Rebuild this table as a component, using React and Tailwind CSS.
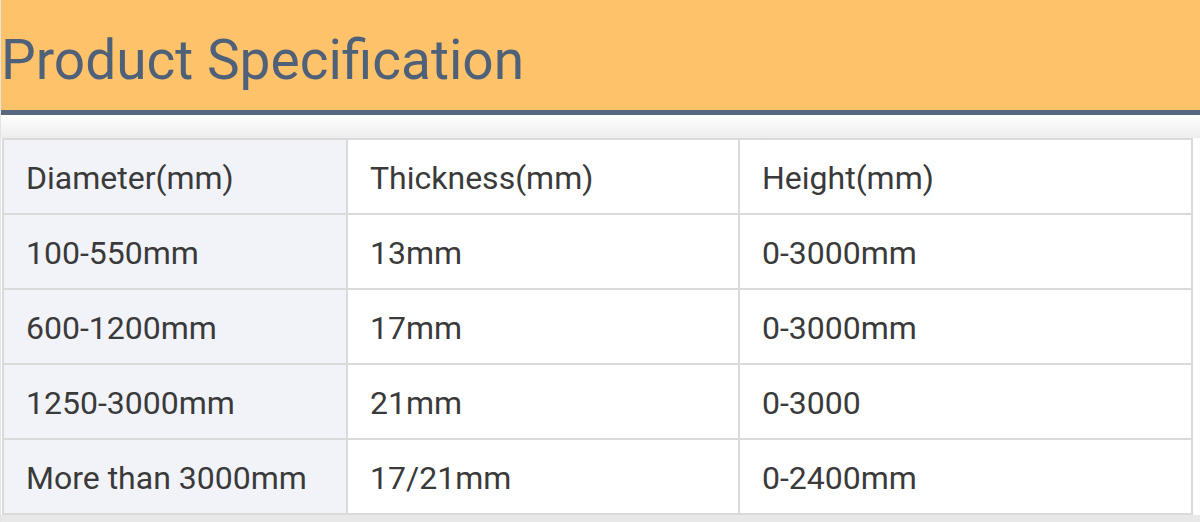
export default function App() {
  const rows = [
    ["Diameter(mm)", "Thickness(mm)", "Height(mm)"],
    ["100-550mm", "13mm", "0-3000mm"],
    ["600-1200mm", "17mm", "0-3000mm"],
    ["1250-3000mm", "21mm", "0-3000"],
    ["More than 3000mm", "17/21mm", "0-2400mm"],
  ]

  return (
    <div className="w-[1200px] h-[522px] overflow-hidden bg-white border-l border-[#e4e4e4] font-['Roboto',sans-serif]">
      {/* Title bar */}
      <div className="h-[115px] bg-[#fec26b] border-b-[5px] border-[#56677f] flex items-start">
        <h1 className="pt-[28px] text-[55px] leading-[64px] text-[#4f6079] font-normal">Product Specification</h1>
      </div>

      {/* shadow gap */}
      <div className="h-[23px] bg-gradient-to-b from-white to-[#ededed]" />

      <div className="pl-px pr-[8px]">
        <table className="w-[1191px] border-collapse table-fixed border-2 border-[#dadada]">
          <colgroup>
            <col className="w-[344px]" />
            <col className="w-[392px]" />
            <col />
          </colgroup>
          <tbody>
            {rows.map((row, i) => (
              <tr key={i} className="h-[75px]">
                {row.map((cell, j) => (
                  <td
                    key={j}
                    className={`border-2 border-[#dadada] pl-[22px] pt-[2px] text-[32px] text-[#3a3a3a] align-middle ${
                      j === 0 ? "bg-[#f2f3f8]" : "bg-white"
                    }`}
                  >
                    {cell}
                  </td>
                ))}
              </tr>
            ))}
          </tbody>
        </table>
      </div>

      <div className="h-[10px] bg-[#e8e8e8]" />
    </div>
  )
}
